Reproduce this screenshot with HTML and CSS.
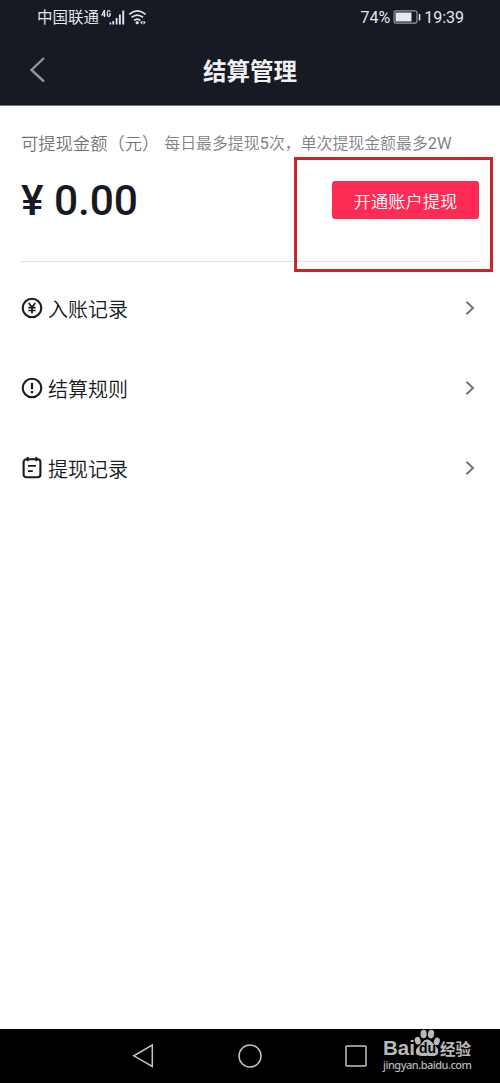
FILE: index.html
```html
<!DOCTYPE html>
<html lang="zh-CN">
<head>
<meta charset="utf-8">
<title>结算管理</title>
<link rel="stylesheet" href="styles.css">
</head>
<body>
<div class="screen">
  <header class="top">
    <div class="status">
      <div class="status-left">
        <span class="carrier">中国联通</span>
        <svg class="signal" width="48" height="18" viewBox="0 0 48 18">
          <g fill="none" stroke="#e4e4e8" stroke-width="1.2">
            <path d="M5.500 9V2L3 7h3.600M11.200 3.800Q10.900 2.400 9.700 2.500 8.200 2.700 8.200 5.500t1.500 3q1.600 0 1.600-2.700H9.700"/>
          </g>
          <path fill="#e4e4e8" d="M10.500 14.500h1.700v2h-1.700zM13.400 12.900h1.700v3.600h-1.700zM16.700 10h1.800v6.500h-1.800zM19.900 6.500h1.900v10h-1.900zM23.300 2.500h1.900v14h-1.900z"/>
          <g fill="none" stroke="#e4e4e8" stroke-width="1.7">
            <path d="M30.300 6.300q8-6.800 16.300 0M32.600 9.400q5.700-4.700 11.500 0M35.100 12.500q3.200-2.600 6.200 0"/>
          </g>
          <circle cx="38.200" cy="14.700" r="1.600" fill="#e4e4e8"/>
          <path d="M41 14.600l2.400-1.900v3.800zM46.900 14.600l-2.400-1.900v3.800z" fill="#e4e4e8"/>
        </svg>
      </div>
      <div class="status-right">
        <span>74%</span>
        <svg width="28" height="14" viewBox="0 0 28 14">
          <rect x="1" y=".9" width="23" height="12.200" rx="2" fill="none" stroke="#9b9ca2" stroke-width="1.100"/>
          <path fill="#e8e8ec" d="M2.500 2.500h16v9h-16zM25.800 4h1.500v6.500h-1.500z"/>
        </svg>
        <span>19:39</span>
      </div>
    </div>
    <div class="titlebar">
      <svg class="back" width="18" height="28" viewBox="0 0 18 28"><path d="M15 2L2.500 14 15 25.500" fill="none" stroke="#92939a" stroke-width="2.400"/></svg>
      <h1 class="title">结算管理</h1>
      <span class="spacer"></span>
    </div>
  </header>

  <main class="content">
    <section class="balance">
      <p class="caption"><span class="label">可提现金额（元）</span><span class="hint">每日最多提现<span class="num">5</span>次，单次提现金额最多<span class="num">2W</span></span></p>
      <div class="amount-row">
        <span class="amount">¥ 0.00</span>
        <button class="withdraw">开通账户提现</button>
      </div>
      <div class="highlight"></div>
    </section>

    <nav class="menu">
      <a class="item">
        <svg width="22" height="22" viewBox="0 0 22 22" fill="none" stroke="#181a22"><circle cx="11" cy="11" r="9.300" stroke-width="2.100"/><path d="M7.800 6l3.200 4.300L14.200 6M11 10.300v6.200M7.400 10.600h7.200M7.400 13.500h7.200" stroke-width="1.700"/></svg>
        <span class="name">入账记录</span>
        <svg class="arrow" width="10" height="16" viewBox="0 0 10 16"><path d="M1.500 1.700L8 8l-6.500 6.300"/></svg>
      </a>
      <a class="item">
        <svg width="22" height="22" viewBox="0 0 22 22" fill="none" stroke="#181a22"><circle cx="11" cy="11" r="9.300" stroke-width="2.100"/><path d="M11 5.800v6.400M11 14v2.200" stroke-width="2.200"/></svg>
        <span class="name">结算规则</span>
        <svg class="arrow" width="10" height="16" viewBox="0 0 10 16"><path d="M1.500 1.700L8 8l-6.500 6.300"/></svg>
      </a>
      <a class="item">
        <svg width="22" height="22" viewBox="0 0 22 22" fill="none" stroke="#181a22" stroke-width="2.100"><rect x="2.600" y="2.300" width="16.800" height="18" rx="2.800"/><path d="M6.700 0v4.200M15.300 0v4.200M7 8.900h8M7 14.100h4.800" stroke-width="1.900"/></svg>
        <span class="name">提现记录</span>
        <svg class="arrow" width="10" height="16" viewBox="0 0 10 16"><path d="M1.500 1.700L8 8l-6.500 6.300"/></svg>
      </a>
    </nav>
  </main>

  <footer class="navbar">
    <svg width="24" height="26" viewBox="0 0 24 26"><path d="M21.300 2v21.500L2.800 12.800z"/></svg>
    <svg width="26" height="26" viewBox="0 0 26 26"><circle cx="13" cy="13" r="11"/></svg>
    <svg width="24" height="24" viewBox="0 0 24 24"><rect x="2" y="2" width="20" height="20" rx="1"/></svg>
    <div class="watermark">
      <div class="brand">
        <span class="bai">Bai</span>
        <span class="paw">
          <svg width="27" height="28" viewBox="0 0 27 28" fill="#b9b9b9">
            <ellipse cx="3.700" cy="11.700" rx="2.900" ry="3.900" transform="rotate(-15 3.700 11.700)"/><ellipse cx="9.600" cy="5" rx="3.100" ry="4.300"/><ellipse cx="17" cy="5.100" rx="3.100" ry="4.300" transform="rotate(10 17 5.100)"/><ellipse cx="22.800" cy="12.400" rx="2.900" ry="3.800" transform="rotate(20 22.800 12.400)"/>
            <path d="M13 10.500c3.100 0 4.900 2.800 7 5 2.100 2 4.800 4.300 4.200 7.700-.7 4.700-6.400 3.800-11 3.600-4.300.2-10.200 1.100-11.200-3-.8-3.700 2.300-5.800 4.600-8.200 2-2.100 3.400-5.100 6.400-5.100z"/>
          </svg>
          <span class="du">du</span>
        </span>
        <span class="jingyan">经验</span>
      </div>
      <div class="url">jingyan.baidu.com</div>
    </div>
  </footer>
</div>
</body>
</html>
```
FILE: styles.css
```css
* { box-sizing: border-box; }
body {
  margin: 0;
  font-family: Roboto, "Noto Sans CJK SC", sans-serif;
  background: #fff;
}
.screen { width: 500px; height: 1083px; display: flex; flex-direction: column; overflow: hidden; }

.top { height: 105px; background: #171923; box-shadow: 0 1px 0 #77787d; flex: none; }
.status {
  height: 34px; padding: 0 36px 0 37px;
  display: flex; justify-content: space-between; align-items: center;
  color: #e6e6ea; font-size: 15.5px;
}
.status-left, .status-right { display: flex; align-items: center; }
.status-right { gap: 3px; font-size: 16px; }
.carrier { line-height: 34px; padding-top: 2px; }
.signal { margin-top: -1px; }
.titlebar { height: 71px; padding: 5px 29px 0; display: flex; justify-content: space-between; align-items: center; }
.back { flex: none; margin-top: -5px; }
.title { margin: 0; color: #f0f0f3; font-size: 23.5px; line-height: 34px; font-weight: 700; }
.spacer { width: 18px; }

.content { flex: 1; padding: 0 21px; }
.balance { position: relative; height: 157px; padding-top: 24px; border-bottom: 1px solid #e1e1e3; }
.caption { margin: 0; display: flex; align-items: center; gap: 5px; height: 26px; white-space: nowrap; }
.label { font-size: 17.3px; color: #74757c; font-weight: 350; }
.hint { font-size: 15.9px; color: #808188; font-weight: 350; }
.num { font-size: 16.5px; font-weight: 400; }
.amount-row { display: flex; align-items: center; justify-content: space-between; height: 38px; margin-top: 26px; }
.amount { font-size: 42.5px; font-weight: 500; color: #171923; line-height: 38px; letter-spacing: -.1px; padding-top: 2px; }
.withdraw {
  width: 147px; height: 38px; padding: 0; border: 0; border-radius: 3px;
  background: #fe2c55; color: #fff; font-family: inherit; font-size: 17.3px; font-weight: 350;
}
.highlight { position: absolute; left: 273px; top: 52px; width: 199px; height: 115px; border: 3px solid #c5282f; }

.menu { padding-top: 6px; }
.item { display: flex; align-items: center; height: 80px; }
.name { flex: 1; margin-left: 5px; font-size: 20px; color: #171923; font-weight: 350; }
.arrow { fill: none; stroke: #77787c; stroke-width: 2.1; margin-right: 4px; }

.navbar {
  position: relative; flex: none; height: 54px; background: #000;
  padding: 0 132px 0 131px;
  display: flex; align-items: center; justify-content: space-between;
}
.navbar > svg { fill: none; stroke: #c4c4c4; stroke-width: 1.5; }
.watermark { position: absolute; left: 383px; top: 0; width: 92px; color: #b9b9b9; }
.brand { display: flex; align-items: flex-end; height: 28px; }
.bai { font: 700 20.5px/18px "Liberation Sans", sans-serif; width: 31px; }
.paw { position: relative; width: 26px; height: 28px; }
.paw svg { display: block; }
.du { position: absolute; left: 5px; top: 12px; color: #000; font: 700 14px/14px "Liberation Sans", sans-serif; }
.jingyan { font: 700 15.5px/17px "Noto Sans CJK SC", sans-serif; }
.url { font: 500 11px/14px "Noto Sans", sans-serif; letter-spacing: -.5px; white-space: nowrap; margin-top: 1px; }
```
